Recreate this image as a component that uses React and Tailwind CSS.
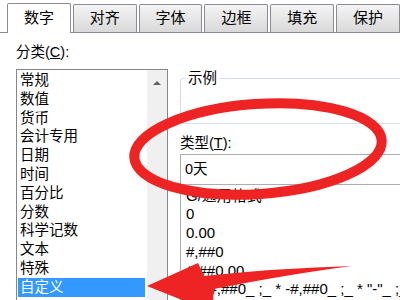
import React from 'react';

const tabs = ['数字', '对齐', '字体', '边框', '填充', '保护'];
const categories = ['常规', '数值', '货币', '会计专用', '日期', '时间', '百分比', '分数', '科学记数', '文本', '特殊', '自定义'];
const formats = ['G/通用格式', '0', '0.00', '#,##0', '#,##0.00', '_ * #,##0_ ;_ * -#,##0_ ;_ * "-"_ ;_ @_ '];

const App = () => {
    return (
        <div className="relative w-[400px] h-[300px] overflow-hidden bg-white text-black font-['Liberation_Sans','Noto_Sans_CJK_SC',sans-serif]">
            {/* tab strip */}
            <div className="flex items-end h-[33px] pl-[7px] gap-[2px] border-b border-[#898c95]">
                {tabs.map((t, i) => (
                    <div
                        key={t}
                        className={i === 0
                            ? 'w-[66px] h-[30px] -mb-px flex items-center justify-center bg-white border border-b-0 border-[#898c95] rounded-t-[2px] text-[15px]'
                            : 'w-[66px] h-[28px] flex items-center justify-center bg-linear-to-b from-[#f4f4f4] to-[#d9d9d9] border border-b-0 border-[#898c95] rounded-t-[2px] text-[15px]'}
                    >
                        {t}
                    </div>
                ))}
            </div>

            <div className="flex">
                {/* category list */}
                <div className="pl-[16px] pt-[9px]">
                    <div className="text-[14.5px] leading-[20px]">分类(<span className="underline">C</span>):</div>
                    <div className="mt-[7px] w-[152px] h-[260px] flex border border-[#828790]">
                        <div className="w-[130px] pt-[1px] pl-[1px] pr-[2px]">
                            {categories.map(c => (
                                <div
                                    key={c}
                                    className={c === '自定义'
                                        ? 'h-[18.8px] leading-[18.8px] pl-[2px] text-[14.5px] bg-[#3399ff] text-white'
                                        : 'h-[18.8px] leading-[18.8px] pl-[2px] text-[14.5px]'}
                                >
                                    {c}
                                </div>
                            ))}
                        </div>
                        <div className="w-[20px] bg-[#f0f0f0] flex justify-center pt-[11px]">
                            <div className="w-0 h-0 border-l-[4px] border-r-[4px] border-b-[4px] border-l-transparent border-r-transparent border-b-[#606060]" />
                        </div>
                    </div>
                </div>

                {/* right side */}
                <div className="ml-[12px] w-[240px] pt-[36px]">
                    <fieldset className="h-[55px] border border-[#d5dfe5] rounded-[3px] pl-[5px]">
                        <legend className="px-[2px] text-[14.5px] leading-[18px]">示例</legend>
                    </fieldset>
                    <div className="mt-[10px] text-[14.5px] leading-[18px]">类型(<span className="underline">T</span>):</div>
                    <div className="mt-[2px] h-[31px] border border-[#abadb3] pl-[4px] flex items-center text-[14.5px]">0天</div>
                    <div className="h-[140px] border-l border-[#abadb3] pl-[5px] pt-[1.5px]">
                        {formats.map(f => (
                            <div key={f} className="h-[18.8px] leading-[18.8px] text-[15px] whitespace-pre">{f}</div>
                        ))}
                    </div>
                </div>
            </div>

            {/* red annotation marks */}
            <svg className="absolute inset-0 pointer-events-none" width="400" height="300" viewBox="0 0 400 300">
                <ellipse cx="258" cy="149" rx="124" ry="45" transform="rotate(-4 258 149)" fill="none" stroke="#ee2424" strokeWidth="10" />
                <path d="M147 286 L198 263 L204 276 Q280 268 352 266 Q290 274 214 289 L212 312 Z" fill="#ee2424" />
            </svg>
        </div>
    );
};

export default App;
